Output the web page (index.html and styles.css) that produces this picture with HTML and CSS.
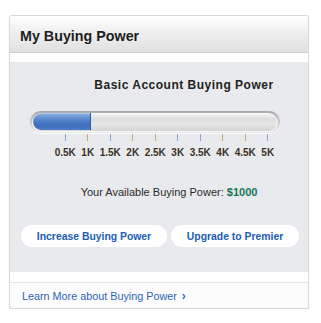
FILE: index.html
```html
<!DOCTYPE html>
<html>
<head>
<meta charset="utf-8">
<link rel="stylesheet" href="styles.css">
</head>
<body>
<div class="card">
  <div class="card-header"><h2 class="title">My Buying Power</h2></div>
  <div class="card-body">
    <div class="panel">
      <div class="panel-title">Basic Account Buying Power</div>
      <div class="meter">
        <div class="track"><div class="fill" style="width:58px"></div></div>
        <div class="scale">
          <div class="step"><span class="tick blue"></span><span class="lbl">0.5K</span></div>
          <div class="step"><span class="tick gold"></span><span class="lbl">1K</span></div>
          <div class="step"><span class="tick blue"></span><span class="lbl">1.5K</span></div>
          <div class="step"><span class="tick gold"></span><span class="lbl">2K</span></div>
          <div class="step"><span class="tick gold"></span><span class="lbl">2.5K</span></div>
          <div class="step"><span class="tick blue"></span><span class="lbl">3K</span></div>
          <div class="step"><span class="tick blue"></span><span class="lbl">3.5K</span></div>
          <div class="step"><span class="tick gold"></span><span class="lbl">4K</span></div>
          <div class="step"><span class="tick gold"></span><span class="lbl">4.5K</span></div>
          <div class="step"><span class="tick blue"></span><span class="lbl">5K</span></div>
        </div>
      </div>
      <div class="available">Your Available Buying Power: <span class="amount">$1000</span></div>
      <div class="actions">
        <a class="btn btn-wide">Increase Buying Power</a>
        <a class="btn">Upgrade to Premier</a>
      </div>
    </div>
  </div>
  <div class="card-footer">
    <a class="more">Learn More about Buying Power <span class="chev">&#x203A;</span></a>
  </div>
</div>
</body>
</html>
```

FILE: styles.css
```css
* { box-sizing: border-box; }
html, body { margin: 0; padding: 0; background: #fff; }
body { font-family: "Liberation Sans", Arial, sans-serif; }

.card {
  margin: 15px 0 0 9px;
  width: 300px;
  border: 1px solid #d9d9d9;
  border-radius: 3px;
  box-shadow: 0 1px 1px rgba(0,0,0,0.18);
  background: #fff;
}

.card-header {
  height: 37px;
  background: linear-gradient(#ffffff, #f4f4f4 30%, #e0e0e0);
  border-bottom: 1px solid #cfcfcf;
  border-radius: 3px 3px 0 0;
  display: flex;
  align-items: center;
  padding-left: 10px;
}
.title {
  margin: 0;
  font-size: 14.3px;
  font-weight: bold;
  color: #1e1e1e;
  padding-top: 3px;
}

.card-body { padding: 9px 0 10px; }

.panel {
  background: #e9eaed;
  height: 210px;
  padding-top: 15px;
}
.panel-title {
  font-size: 12px;
  letter-spacing: 0.5px;
  font-weight: bold;
  color: #222;
  text-align: center;
  padding-left: 50px;
  line-height: 16px;
}

.meter { margin: 18px 0 0 20px; }
.track {
  width: 250px;
  height: 22px;
  border-radius: 11px;
  background: linear-gradient(#a9a9a9, #c4c4c4 40%, #e6e6e6);
  padding: 2px 3px 2px 3px;
  box-shadow: 0 1px 0 #fff;
  position: relative;
}
.track::before {
  content: "";
  position: absolute;
  left: 2px; right: 2px; top: 2px; bottom: 1px;
  border-radius: 10px;
  background: linear-gradient(#f2f2f2, #dcdcdc 30%, #e6e6e6 60%, #d2d2d2);
  border: 1px solid #fafafa;
}
.fill {
  position: relative;
  height: 17px;
  border-radius: 9px 0 0 9px;
  background: linear-gradient(#8fb1e0, #5b8bcf 35%, #3f6fbb 70%, #4a7bc4);
  border-right: 1px solid #2f5ea8;
  box-shadow: inset 0 1px 0 rgba(255,255,255,0.35);
}

.scale {
  display: flex;
  margin-left: 24px;
  margin-top: 1px;
}
.step {
  width: 22.5px;
  display: flex;
  flex-direction: column;
  align-items: center;
}
.tick { width: 1px; height: 7px; display: block; }
.tick.blue { background: #86a8d6; }
.tick.gold { background: #c4ab78; }
.lbl {
  margin-top: 6px;
  font-size: 10px;
  font-weight: bold;
  color: #3a3226;
  white-space: nowrap;
  line-height: 11px;
}

.available {
  margin-top: 28px;
  font-size: 11px;
  color: #2a2a2a;
  text-align: center;
  padding-left: 20px;
  line-height: 13px;
}
.amount { font-weight: bold; color: #17765a; }

.actions {
  display: flex;
  gap: 4px;
  margin: 26px 0 0 11px;
}
.btn {
  height: 22px;
  border-radius: 11px;
  background: #fff;
  color: #1d5cb6;
  font-size: 10.4px;
  font-weight: bold;
  display: flex;
  align-items: center;
  justify-content: center;
  width: 128px;
}
.btn-wide { width: 146px; }

.card-footer {
  border-top: 1px solid #e6e6e6;
  background: #fcfcfc;
  height: 26px;
  display: flex;
  align-items: center;
  padding-left: 12px;
  border-radius: 0 0 3px 3px;
}
.more {
  font-size: 10.8px;
  color: #2d63b5;
}
.chev { font-weight: bold; font-size: 12px; margin-left: 2px; }
```
